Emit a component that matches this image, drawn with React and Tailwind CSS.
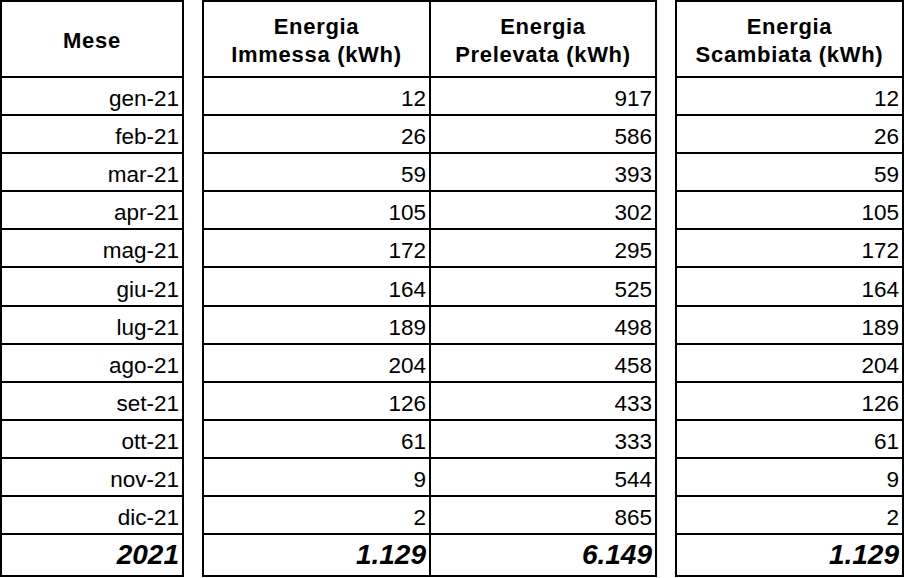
import React from 'react';

const rows = [
    ['gen-21', '12', '917', '12'],
    ['feb-21', '26', '586', '26'],
    ['mar-21', '59', '393', '59'],
    ['apr-21', '105', '302', '105'],
    ['mag-21', '172', '295', '172'],
    ['giu-21', '164', '525', '164'],
    ['lug-21', '189', '498', '189'],
    ['ago-21', '204', '458', '204'],
    ['set-21', '126', '433', '126'],
    ['ott-21', '61', '333', '61'],
    ['nov-21', '9', '544', '9'],
    ['dic-21', '2', '865', '2'],
];

const totals = ['2021', '1.129', '6.149', '1.129'];

const HeadCell = ({ children, className = '' }) => (
    <div className={`h-[74px] flex items-center justify-center text-center pt-[4px] font-bold text-[22px] leading-[28px] tracking-[0.7px] ${className}`}>
        <div>{children}</div>
    </div>
);

const Cell = ({ children, className = '' }) => (
    <div className={`flex items-end justify-end pr-[3px] pb-[3.5px] text-[22.5px] leading-none ${className}`}>{children}</div>
);

const TotalCell = ({ children, className = '' }) => (
    <div className={`flex items-center justify-end pr-[3px] pt-[1px] font-bold italic text-[28px] leading-none ${className}`}>{children}</div>
);

const Table = ({ width, cols, heads, idx }) => (
    <div className={`border-2 border-black box-border ${width}`}>
        <div className={`grid ${cols}`}>
            {heads.map((h, i) => (
                <HeadCell key={i} className={i < heads.length - 1 ? 'border-r-2 border-black' : ''}>{h}</HeadCell>
            ))}
        </div>
        {rows.map((r) => (
            <div key={r[0]} className={`grid ${cols} h-[38.1px] border-t-2 border-black`}>
                {idx.map((c, i) => (
                    <Cell key={c} className={i < idx.length - 1 ? 'border-r-2 border-black' : ''}>{r[c]}</Cell>
                ))}
            </div>
        ))}
        <div className={`grid ${cols} h-[41.5px] border-t-2 border-black`}>
            {idx.map((c, i) => (
                <TotalCell key={c} className={i < idx.length - 1 ? 'border-r-2 border-black' : ''}>{totals[c]}</TotalCell>
            ))}
        </div>
    </div>
);

export default function App() {
    return (
        <div className="w-[905px] h-[578px] bg-white text-black overflow-hidden" style={{ fontFamily: '"Liberation Sans", Arial, sans-serif' }}>
            <div className="flex items-start gap-[18px]">
                <Table width="w-[184px]" cols="grid-cols-1" heads={['Mese']} idx={[0]} />
                <Table
                    width="w-[455px]"
                    cols="grid-cols-[227px_224px]"
                    heads={[<>Energia<br />Immessa (kWh)</>, <>Energia<br />Prelevata (kWh)</>]}
                    idx={[1, 2]}
                />
                <Table width="w-[229px]" cols="grid-cols-1" heads={[<>Energia<br />Scambiata (kWh)</>]} idx={[3]} />
            </div>
        </div>
    );
}
